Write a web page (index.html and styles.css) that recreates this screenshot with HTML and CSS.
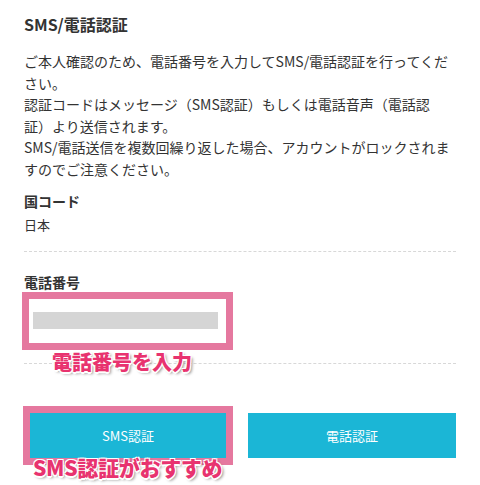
FILE: index.html
```html
<!DOCTYPE html>
<html lang="ja">
<head>
  <meta charset="UTF-8">
  <title>SMS/電話認証</title>
  <link rel="stylesheet" href="styles.css">
</head>
<body>

  <div class="page">
    <h1 class="title">SMS/電話認証</h1>
    <p class="lead">ご本人確認のため、電話番号を入力してSMS/電話認証を行ってください。<br>認証コードはメッセージ（SMS認証）もしくは電話音声（電話認<br>証）より送信されます。<br>SMS/電話送信を複数回繰り返した場合、アカウントがロックされますのでご注意ください。</p>

    <div class="field">
      <div class="label">国コード</div>
      <div class="value">日本</div>
    </div>

    <div class="field field-phone">
      <div class="label">電話番号</div>
      <div class="mark-box">
        <div class="masked"></div>
      </div>
      <span class="note note-phone">電話番号を入力</span>
    </div>

    <div class="actions">
      <div class="btn-wrap">
        <button class="btn">SMS認証</button>
        <span class="mark-frame"></span>
        <span class="note note-sms">SMS認証がおすすめ</span>
      </div>
      <div class="btn-wrap">
        <button class="btn">電話認証</button>
      </div>
    </div>
  </div>

</body>
</html>
```

FILE: styles.css
```css
body { margin: 0; background: #fff; color: #333; font-family: "Noto Sans CJK JP", sans-serif; }
.page { width: 432px; min-height: 472px; padding: 13px 24px 0; }
.title { font-size: 16px; line-height: 22px; font-weight: bold; margin: 0 0 16px; }
.lead { font-size: 14px; line-height: 21.5px; margin: 0; }

.field { padding: 11px 0 16px; border-bottom: 1px dashed #d8d8d8; }
.field-phone { position: relative; padding: 20px 0 13px; }
.label { font-size: 14px; line-height: 20px; font-weight: bold; }
.value { font-size: 13px; line-height: 20px; margin-top: 4px; }

.mark-box { margin-left: -2px; width: 197px; height: 44px; border: 7px solid #e5789f; background: #fff; }
.masked { margin: 13px 0 0 4px; width: 185px; height: 17px; background: #d5d5d5; }

.actions { display: flex; gap: 16px; margin-top: 49px; }
.btn-wrap { position: relative; flex: 1; }
.btn { display: block; width: 100%; height: 45px; border: 0; background: #1bb6d6; color: #fff; font-family: inherit; font-size: 13px; }

.mark-frame { position: absolute; left: -1px; top: -7px; width: 196px; height: 45px; border: 7px solid #e5789f; }

.note { position: absolute; color: #e8336f; font-weight: 900; font-size: 20px; line-height: 24px; white-space: nowrap;
  text-shadow: -1px -1px 0 #fff, 1px -1px 0 #fff, -1px 1px 0 #fff, 1px 1px 0 #fff, 0 2px 0 #fff, 2px 2px 3px rgba(0, 0, 0, 0.45); }
.note-phone { left: 28px; top: 98px; }
.note-sms { left: 9px; top: 42px; font-size: 21px; letter-spacing: -0.3px; }
```
